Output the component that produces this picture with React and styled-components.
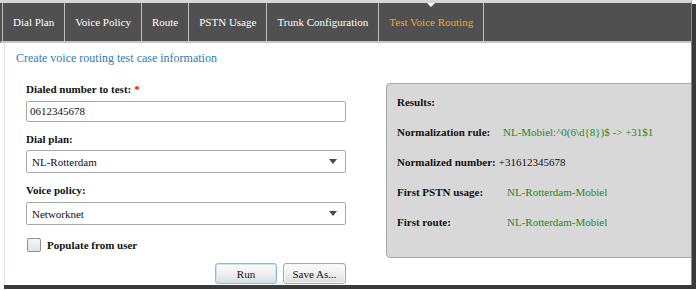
import React from 'react';
import styled, { createGlobalStyle } from 'styled-components';

const GlobalStyle = createGlobalStyle`
  html, body {
    margin: 0;
    padding: 0;
    background: #ffffff;
  }
  body {
    width: 697px;
    height: 290px;
    overflow: hidden;
  }
`;

const Frame = styled.div`
  box-sizing: border-box;
  width: 692px;
  height: 285px;
  font-family: 'Liberation Serif', 'Times New Roman', serif;
  border-top: 3px solid #d6d6d6;
  border-right: 1px solid #8a8a8a;
  box-shadow: 4px 4px 0 #3a3a3a;
  background: #ffffff;
  overflow: hidden;
  display: flex;
  flex-direction: column;
`;

const Nav = styled.nav`
  display: flex;
  height: 38px;
  background: #505050;
  border-bottom: 2px solid #c6c6c6;
  padding-left: 1px;
  border-left: 1px solid #505050;
`;

const Tab = styled.div`
  position: relative;
  display: flex;
  align-items: center;
  padding: 0 10px;
  font-size: 11px;
  color: ${(p) => (p.$active ? '#f5a623' : '#ffffff')};
  border-right: 1px solid #bdbdbd;
  border-left: ${(p) => (p.$first ? '1px solid #bdbdbd' : 'none')};
  white-space: nowrap;

  &::before {
    content: '';
    display: ${(p) => (p.$active ? 'block' : 'none')};
    position: absolute;
    top: 0;
    left: 50%;
    margin-left: -4px;
    border-left: 4px solid transparent;
    border-right: 4px solid transparent;
    border-top: 4px solid #ffffff;
  }
`;

const Content = styled.div`
  flex: 1;
  margin-left: 4px;
  border-left: 1px solid #e6dde6;
  padding: 8px 0 0 11px;
`;

const Heading = styled.div`
  font-size: 12px;
  line-height: 14px;
  color: #2f7ab3;
`;

const Row = styled.div`
  display: flex;
  align-items: flex-start;
  margin-top: 18px;
`;

const Form = styled.div`
  width: 320px;
  margin-left: 10px;
  display: flex;
  flex-direction: column;
`;

const Label = styled.div`
  font-size: 11px;
  line-height: 13px;
  font-weight: bold;
  color: #111;
  margin-top: ${(p) => p.$top || 0}px;
  margin-bottom: ${(p) => p.$bottom || 4}px;
`;

const Required = styled.span`
  color: #e00000;
  margin-left: 3px;
`;

const TextBox = styled.div`
  box-sizing: border-box;
  height: 21px;
  border: 1px solid #a9a9a9;
  border-radius: 2px;
  padding: 0 3px;
  font-size: 11px;
  line-height: 19px;
  color: #111;
`;

const Select = styled.div`
  box-sizing: border-box;
  height: 23px;
  border: 1px solid #a9a9a9;
  border-radius: 2px;
  padding: 0 5px;
  display: flex;
  align-items: center;
  justify-content: space-between;
  font-size: 11px;
  color: #111;
`;

const Arrow = styled.span`
  width: 0;
  height: 0;
  border-left: 4px solid transparent;
  border-right: 4px solid transparent;
  border-top: 5px solid #4a4a4a;
  margin-right: 3px;
`;

const CheckRow = styled.label`
  display: flex;
  align-items: center;
  gap: 6px;
  margin-top: 13px;
  font-size: 11px;
  font-weight: bold;
  color: #111;
`;

const Box = styled.span`
  box-sizing: border-box;
  width: 14px;
  height: 14px;
  margin-left: 1px;
  border: 1px solid #8e8f8f;
  border-radius: 2px;
  background: linear-gradient(#f4f6f8, #dfe4ea);
`;

const Buttons = styled.div`
  display: flex;
  justify-content: flex-end;
  gap: 6px;
  margin-top: 11px;
`;

const Button = styled.button`
  box-sizing: border-box;
  width: ${(p) => p.$w}px;
  height: 21px;
  padding: 0;
  font-family: inherit;
  font-size: 11px;
  color: #111;
  border: 1px solid ${(p) => (p.$focus ? '#7ec3dc' : '#a7a7a7')};
  border-radius: 3px;
  background: linear-gradient(#fbfbfb 0%, #f0f0f0 50%, #dcdcdc 100%);
  box-shadow: ${(p) => (p.$focus ? 'inset 0 0 0 1px #c8e6f2' : 'inset 0 0 0 1px #f6f6f6')};
`;

const Results = styled.div`
  flex: 1;
  margin-left: 40px;
  margin-right: -12px;
  height: 175px;
  box-sizing: border-box;
  background: #d8d8d8;
  border: 1px solid #a8a8a8;
  border-radius: 4px;
  padding: 12px 0 0 10px;
  display: flex;
  flex-direction: column;
  gap: 17px;
`;

const ResultRow = styled.div`
  display: flex;
  font-size: 11px;
  line-height: 13px;
`;

const ResultLabel = styled.span`
  font-weight: bold;
  color: #111;
  min-width: ${(p) => p.$w || 0}px;
  padding-right: 3px;
`;

const ResultValue = styled.span`
  color: ${(p) => (p.$plain ? '#111' : '#1a8a1a')};
`;

const tabs = [
  'Dial Plan',
  'Voice Policy',
  'Route',
  'PSTN Usage',
  'Trunk Configuration',
  'Test Voice Routing',
];

export default function App() {
  return (
    <>
      <GlobalStyle />
      <Frame>
        <Nav>
          {tabs.map((t, i) => (
            <Tab key={t} $first={i === 0} $active={i === tabs.length - 1}>
              {t}
            </Tab>
          ))}
        </Nav>
        <Content>
          <Heading>Create voice routing test case information</Heading>
          <Row>
            <Form>
              <Label $bottom={5}>
                Dialed number to test:<Required>*</Required>
              </Label>
              <TextBox>0612345678</TextBox>
              <Label $top={11} $bottom={4}>Dial plan:</Label>
              <Select>
                NL-Rotterdam
                <Arrow />
              </Select>
              <Label $top={11} $bottom={5}>Voice policy:</Label>
              <Select>
                Networknet
                <Arrow />
              </Select>
              <CheckRow>
                <Box />
                Populate from user
              </CheckRow>
              <Buttons>
                <Button $w={62} $focus>Run</Button>
                <Button $w={63}>Save As...</Button>
              </Buttons>
            </Form>
            <Results>
              <ResultRow>
                <ResultLabel>Results:</ResultLabel>
              </ResultRow>
              <ResultRow>
                <ResultLabel $w={103}>Normalization rule:</ResultLabel>
                <ResultValue>NL-Mobiel:^0(6\d{'{'}8{'}'})$ -&gt; +31$1</ResultValue>
              </ResultRow>
              <ResultRow>
                <ResultLabel $w={95}>Normalized number:</ResultLabel>
                <ResultValue $plain>+31612345678</ResultValue>
              </ResultRow>
              <ResultRow>
                <ResultLabel $w={107}>First PSTN usage:</ResultLabel>
                <ResultValue>NL-Rotterdam-Mobiel</ResultValue>
              </ResultRow>
              <ResultRow>
                <ResultLabel $w={107}>First route:</ResultLabel>
                <ResultValue>NL-Rotterdam-Mobiel</ResultValue>
              </ResultRow>
            </Results>
          </Row>
        </Content>
      </Frame>
    </>
  );
}
